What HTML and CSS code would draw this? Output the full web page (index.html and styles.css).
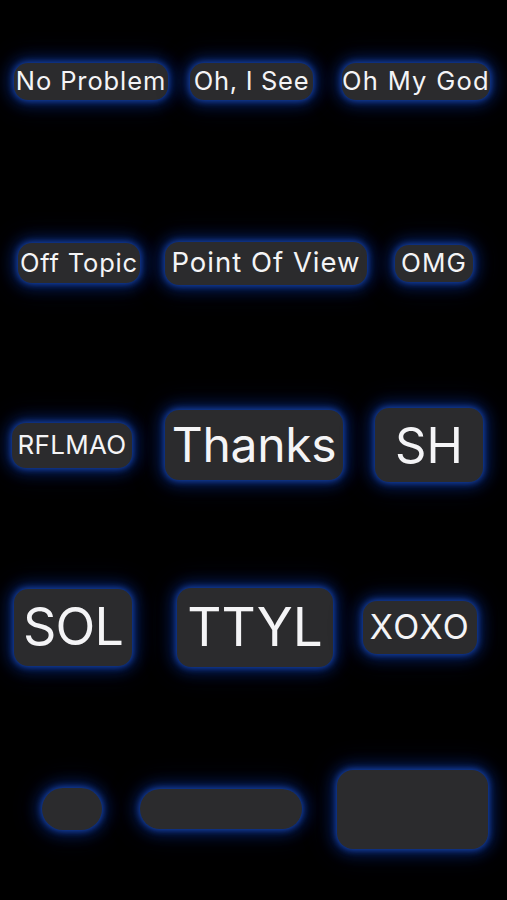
FILE: index.html
```html
<!DOCTYPE html>
<html>
<head>
<meta charset="utf-8">
<link rel="stylesheet" href="styles.css">
</head>
<body>
<main class="board">
  <div class="row row-1">
    <div class="pill np">No Problem</div>
    <div class="pill ois">Oh, I See</div>
    <div class="pill omgod">Oh My God</div>
  </div>
  <div class="row row-2">
    <div class="pill ot">Off Topic</div>
    <div class="pill pov">Point Of View</div>
    <div class="pill omg">OMG</div>
  </div>
  <div class="row row-3">
    <div class="pill rfl">RFLMAO</div>
    <div class="pill thx">Thanks</div>
    <div class="pill sh">SH</div>
  </div>
  <div class="row row-4">
    <div class="pill sol">SOL</div>
    <div class="pill ttyl">TTYL</div>
    <div class="pill xoxo">XOXO</div>
  </div>
  <div class="row row-5">
    <div class="pill e1"></div>
    <div class="pill e2"></div>
    <div class="pill e3"></div>
  </div>
</main>
</body>
</html>
```

FILE: styles.css
```css
html, body {
  margin: 0;
  padding: 0;
  background: #000;
}
body {
  width: 507px;
  height: 900px;
  overflow: hidden;
  font-family: Inter, "Liberation Sans", sans-serif;
  color: #f4f4f6;
}
.board {
  display: flex;
  flex-direction: column;
  gap: 102px;
  padding-top: 41px;
}
.row {
  display: flex;
  align-items: center;
  height: 80px;
}
.pill {
  display: flex;
  align-items: center;
  justify-content: center;
  flex: none;
  background: #2b2b2d;
  border-radius: 14px;
  line-height: 1;
  white-space: nowrap;
  box-shadow: 0 0 6px 1px rgba(28, 84, 205, 0.75), 0 0 14px 5px rgba(14, 52, 155, 0.5), 0 0 26px 9px rgba(5, 25, 80, 0.32);
}

/* row 1 */
.row-1 { padding-left: 14px; }
.np { width: 154px; height: 37px; font-size: 25.5px; letter-spacing: 0.9px; }
.ois { width: 123px; height: 37px; font-size: 25.5px; letter-spacing: 0.7px; margin-left: 22px; }
.omgod { width: 148px; height: 37px; font-size: 25.5px; letter-spacing: 1.3px; margin-left: 29px; }

/* row 2 */
.row-2 { padding-left: 18px; }
.ot { width: 122px; height: 40px; font-size: 25.5px; letter-spacing: 0.8px; }
.pov { width: 202px; height: 43px; font-size: 27.5px; letter-spacing: 1px; margin-left: 25px; }
.omg { width: 78px; height: 37px; font-size: 26px; letter-spacing: 1px; margin-left: 28px; }

/* row 3 */
.row-3 { padding-left: 12px; }
.rfl { width: 120px; height: 45px; font-size: 26px; letter-spacing: 0.3px; }
.thx { width: 178px; height: 70px; font-size: 48px; letter-spacing: -0.3px; margin-left: 33px; }
.sh { width: 108px; height: 74px; font-size: 49px; margin-left: 32px; }

/* row 4 */
.row-4 { padding-left: 14px; }
.sol { width: 118px; height: 77px; font-size: 52px; letter-spacing: -0.8px; }
.ttyl { width: 156px; height: 79px; font-size: 53px; margin-left: 45px; }
.xoxo { width: 114px; height: 53px; font-size: 34px; letter-spacing: 1.4px; margin-left: 30px; }

/* row 5 */
.row-5 { padding-left: 42px; }
.e1 { width: 60px; height: 42px; border-radius: 21px; }
.e2 { width: 162px; height: 40px; border-radius: 20px; margin-left: 38px; }
.e3 { width: 151px; height: 79px; border-radius: 16px; margin-left: 35px; }
```
